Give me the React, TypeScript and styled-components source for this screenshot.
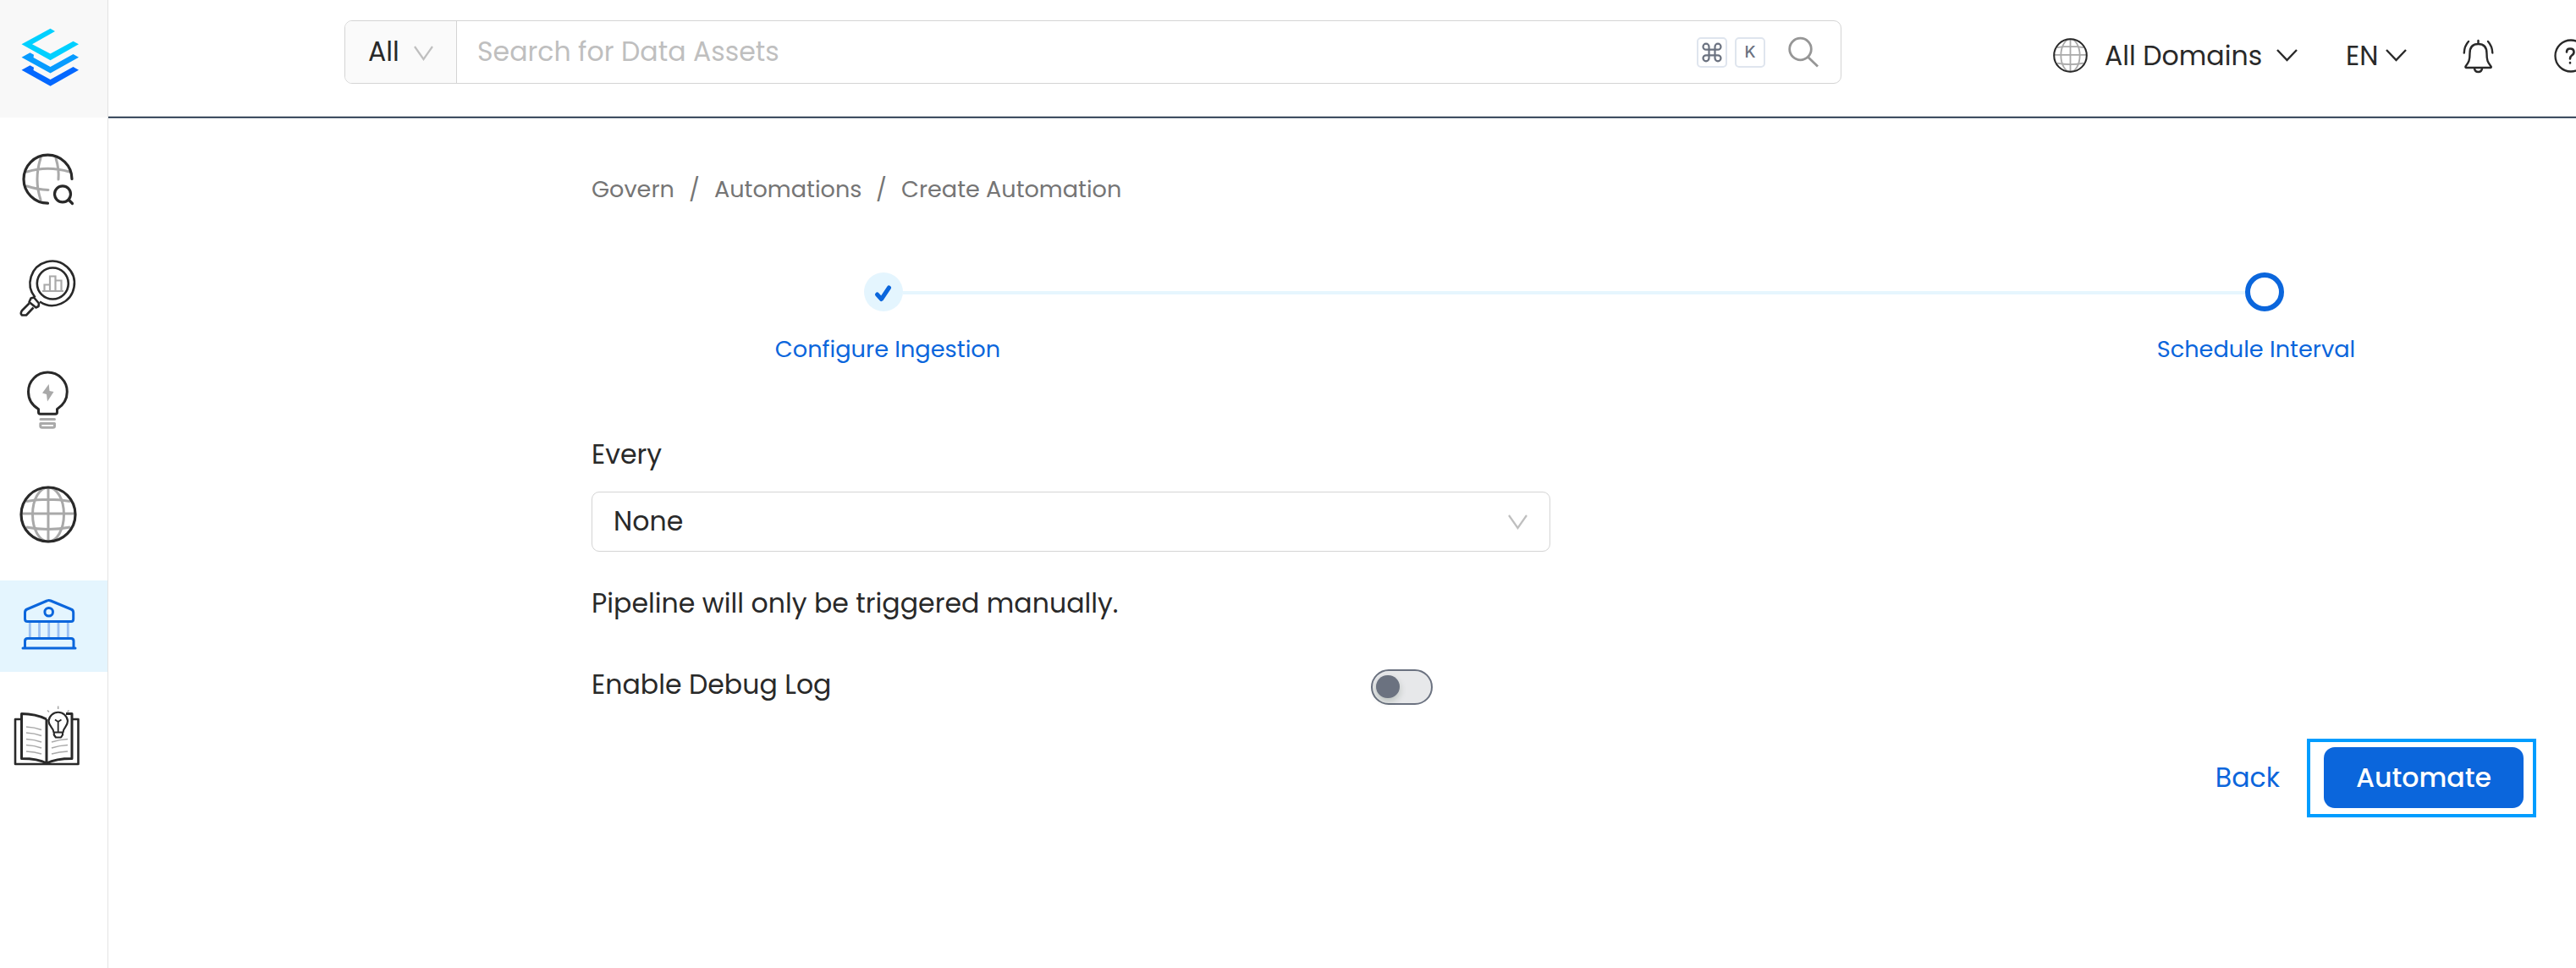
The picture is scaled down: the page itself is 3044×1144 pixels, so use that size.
import React from "react";
import styled, { createGlobalStyle } from "styled-components";

const GlobalStyle = createGlobalStyle`
  * { box-sizing: border-box; }
  body { margin: 0; background: #fff; overflow: hidden; }
`;

const ink = "#292929";
const muted = "#a9a9a9";
const primary = "#0b66dc";
const tint = "#e4f5fe";

const Shell = styled.div`
  display: flex;
  width: 3044px;
  height: 1144px;
  overflow: hidden;
  background: #fff;
  color: ${ink};
  font-family: Poppins, Inter, "Open Sans", sans-serif;
  font-size: 31.6px;
  line-height: 48px;
`;

const Sidebar = styled.nav`
  flex: none;
  width: 128px;
  border-right: 1px solid #e3e3e3;
`;

const NavCell = styled.div<{ $h: number; $bg?: string }>`
  height: ${(p) => p.$h}px;
  background: ${(p) => p.$bg ?? "transparent"};
  svg { display: block; }
`;

const DomainCell = styled(NavCell)`
  padding: 34px 0 0 23px;
`;

const Main = styled.div`
  flex: 1;
  min-width: 0;
  display: flex;
  flex-direction: column;
`;

const Header = styled.header`
  flex: none;
  height: 140px;
  display: flex;
  align-items: flex-start;
  border-bottom: 1px solid #8793a0;
  box-shadow: inset 0 -1px 0 #10223a, inset 0 -2px 0 #c6cace;
  overflow: hidden;
`;

const SearchBar = styled.div`
  flex: none;
  width: 1769px;
  height: 75px;
  margin: 24px 0 0 279px;
  display: flex;
  align-items: center;
  border: 1px solid #d4d4d4;
  border-radius: 9px;
  overflow: hidden;
`;

const Scope = styled.div`
  width: 132px;
  height: 100%;
  padding: 0 0 2px 27px;
  display: flex;
  align-items: center;
  background: #fafafa;
  border-right: 1px solid #d4d4d4;
  svg { margin: 4px 0 0 17px; }
`;

const Label = styled.span<{ $color?: string; $weight?: number; $w?: number }>`
  display: inline-block;
  white-space: nowrap;
  color: ${(p) => p.$color ?? "inherit"};
  font-weight: ${(p) => p.$weight ?? 400};
  width: ${(p) => (p.$w ? `${p.$w}px` : "auto")};
`;

const Placeholder = styled.div`
  flex: 1;
  padding: 0 0 2px 24px;
  color: #bfbfbf;
`;

const Keys = styled.div`
  display: flex;
  gap: 9px;
  margin-right: 25px;
`;

const Key = styled.kbd`
  width: 36px;
  height: 36px;
  display: flex;
  align-items: center;
  justify-content: center;
  border: 2px solid #dfe5ee;
  border-radius: 5px;
  color: #6b7280;
  font: 500 19px Inter, sans-serif;
`;

const SearchIcon = styled.svg`
  margin-right: 24px;
`;

const Tools = styled.div`
  display: flex;
  align-items: center;
  height: 131px;
  flex: none;
  margin-left: 250px;
  > * { flex: none; }
`;

const Gap = styled.div<{ $w: number }>`
  width: ${(p) => p.$w}px;
`;

const Content = styled.main`
  padding: 64px 47px 0 571px;
`;

const Breadcrumb = styled.div`
  display: flex;
  font-size: 27.1px;
  line-height: 40px;
  color: #757575;
`;

const Markers = styled.div`
  display: flex;
  align-items: center;
  width: 1678px;
  margin: 78px 0 0 322px;
`;

const DoneMark = styled.div`
  width: 46px;
  height: 46px;
  border-radius: 50%;
  background: ${tint};
`;

const Track = styled.div`
  flex: 1;
  height: 4px;
  margin-top: 1px;
  background: #e6f6fe;
`;

const CurrentMark = styled.div`
  width: 46px;
  height: 46px;
  border-radius: 50%;
  border: 6px solid ${primary};
`;

const StepLabels = styled.div`
  display: flex;
  justify-content: space-between;
  width: 2017px;
  margin: 25px 0 0 150px;
  font-size: 27.2px;
  line-height: 40px;
  color: ${primary};
`;

const StepLabel = styled.div`
  width: 400px;
  display: flex;
  justify-content: center;
`;

const FieldTitle = styled.div`
  margin-top: 80px;
`;

const Select = styled.div`
  display: flex;
  align-items: center;
  justify-content: space-between;
  width: 1133px;
  height: 71px;
  margin-top: 20px;
  padding: 0 26px 2px 25px;
  border: 1px solid #d4d4d4;
  border-radius: 9px;
  svg { margin-top: 2px; }
`;

const Note = styled.div`
  margin-top: 37px;
`;

const ToggleRow = styled.div`
  display: flex;
  align-items: center;
  justify-content: space-between;
  width: 994px;
  height: 48px;
  margin-top: 48px;
`;

const Toggle = styled.div`
  width: 73px;
  height: 42px;
  margin-top: 5px;
  padding: 5px 4px;
  border: 2.5px solid #6b7280;
  border-radius: 21px;
  background: #e7e8ea;
`;

const Knob = styled.div`
  width: 28px;
  height: 27px;
  border-radius: 14px;
  background: #6b7280;
  box-shadow: 0 4px 8px rgba(0, 35, 11, 0.2);
`;

const Actions = styled.div`
  display: flex;
  justify-content: flex-end;
  align-items: center;
  gap: 32px;
  margin-top: 40px;
  > span { padding-bottom: 2px; }
`;

const Highlight = styled.div`
  width: 271px;
  height: 93px;
  padding: 6px 0 0 16px;
  border: 4px solid #009dff;
`;

const Primary = styled.div`
  width: 236px;
  height: 72px;
  display: flex;
  align-items: center;
  justify-content: center;
  padding-bottom: 1px;
  border-radius: 13px;
  background: ${primary};
  color: #fff;
  text-shadow: 0 -1px 0 rgba(0, 0, 0, 0.12);
`;

const Chevron = ({ w, h, color, sw }: { w: number; h: number; color: string; sw: number }) => (
  <svg width={w} height={h} viewBox={`0 0 ${w} ${h}`} fill="none" stroke={color} strokeWidth={sw}>
    <path d={`M1 1L${w / 2} ${h - 2}L${w - 1} 1`} />
  </svg>
);

const Globe = ({ size, sw, inner }: { size: number; sw: number; inner: number }) => (
  <svg width={size} height={size} viewBox="0 0 68 68" fill="none">
    <g stroke={muted} strokeWidth={inner}>
      <path d="M34 2V66M2 33H66M8 18.5Q34 14 60 18.5M8 49Q34 54 60 49" />
      <ellipse cx="34" cy="34" rx="18.5" ry="32" />
    </g>
    <circle cx="34" cy="34" r="32" stroke={ink} strokeWidth={sw} />
  </svg>
);

const Logo = () => (
  <svg width="127" height="139" viewBox="0 0 127 139">
    <path fill="#00d0ff" d="M59.5 33.7L25.5 52.3L59.5 71.3L93 52.3L86.5 48.7L59.5 63.5L38 52.3L65 37Z" />
    <path fill="#079bff" d="M35.5 62.3L25.5 67.7L59.5 86.5L93 67.7L86.5 64L59.5 79L39.5 68L40 64.7Z" />
    <path fill="#0468ff" d="M35.5 77.3L25.5 82.7L59.5 101.7L93 82.7L86.5 79L59.5 94L39.5 83L40 79.7Z" />
  </svg>
);

/* Each sidebar glyph keeps page-level y values through its viewBox origin. */
const ExploreIcon = () => (
  <svg width="127" height="141" viewBox="0 139 127 141" fill="none" strokeLinecap="round">
    <path stroke={muted} strokeWidth="3" d="M48 187Q40 212 48 236M66 187Q70 200 69 212M32 203Q56 195.500 82 203M32 220Q44 224 57 224.500" />
    <g stroke={ink} strokeWidth="3.200">
      <path d="M85 211.500A28.500 28.500 0 1 0 56.500 240.200" />
      <circle cx="74" cy="229.300" r="9.500" />
      <path d="M81 236L85.500 240.500" />
    </g>
  </svg>
);

const QualityIcon = () => (
  <svg width="127" height="130" viewBox="0 280 127 130" fill="none">
    <path stroke={muted} strokeWidth="2.200" d="M50 344H75M52.500 343V336.500H59M59 343V326.500H65.500V343M65.500 331.500H72.500V343" />
    <g stroke={ink} strokeWidth="2.600" strokeLinejoin="round">
      <circle cx="62.300" cy="335" r="18.500" />
      <path d="M41.500 351.500A26.200 26.200 0 1 1 47 356.500" />
      <path d="M36.500 352.500L40 351.500L46 358.500L45.500 362L42.500 363.500L34.500 357Z" />
      <path d="M34.500 358.500L26 367Q23.500 370.500 26 372.500H31L39.500 363.500" />
    </g>
  </svg>
);

const InsightIcon = () => (
  <svg width="127" height="130" viewBox="0 410 127 130" fill="none">
    <path stroke={ink} strokeWidth="3" strokeLinejoin="round" d="M45.500 483.500C38 479 33.500 472 33.500 463A22.900 22.900 0 1 1 79.300 463C79.300 472 74.500 479 67.500 483.500V487Q67.500 489.300 65.500 489.300H47.500Q45.500 489.300 45.500 487Z" />
    <path fill={muted} d="M57.700 454L50 464.500L55 466L56 474.500L63.500 463L58.500 462Z" />
    <path stroke={muted} strokeWidth="3" strokeLinecap="round" strokeLinejoin="round" d="M48 495.500H64.500M47.800 500.500H64.500V503.500Q64.500 505.300 62.500 505.300H49.800Q47.800 505.300 47.800 503.500Z" />
  </svg>
);

const GovernIcon = () => (
  <svg width="127" height="108" viewBox="0 686 127 108" fill="none" strokeLinecap="round" strokeLinejoin="round">
    <path stroke="#9cc0f3" strokeWidth="2.800" strokeLinecap="butt" d="M35.300 736V753M46.500 736V753M57.700 736V753M69 736V753M80.300 736V753" />
    <g stroke={primary} strokeWidth="3">
      <path d="M29.500 724Q29.500 721 32 720L55.500 710Q57.700 709 60 710L84 720Q86.700 721 86.700 724V731.500Q86.700 734.500 84 734.500H32.500Q29.500 734.500 29.500 731.500Z" />
      <circle cx="57.700" cy="723.300" r="4.800" />
      <path d="M29.500 765V757.500Q29.500 754.500 32.500 754.500H84Q87 754.500 87 757.500V765M27 766H89" />
    </g>
  </svg>
);

const GlossaryIcon = () => (
  <svg width="127" height="140" viewBox="0 794 127 140" fill="none" strokeLinejoin="round">
    <g stroke={muted} strokeWidth="1.600">
      <path d="M31 859Q41 859.500 49 862.500M31 866Q41 866.500 49 869.500M31 873.500Q41 874 49 877M31 880.500Q41 881 49 884M31 888Q41 888.500 49 891" />
      <path d="M61 877Q70 874 80 873.500M61 884Q70 881 80 880.500M61 891Q70 888.500 80 888" />
      <path d="M68.700 834.500V838M56 839.500L58 841.500M81.500 839.500L79.500 841.500" />
    </g>
    <g stroke={ink} strokeWidth="2.600">
      <path d="M24.500 850H18V903H92.500V850H86" />
      <path d="M55 850Q42 843.500 25.500 843.500V896.500Q45 896.500 55 902Q66 896.500 85 896.500V843.500H78M55 850V902" strokeWidth="3" />
      <path fill="#fff" strokeWidth="2.200" d="M63.500 865.500C63.500 860 57.500 859 57.500 852A11.300 11.300 0 0 1 80 852C80 859 74.500 860 74.500 865.500ZM63.800 866V868.500L66 871.500H72L74 868.500V866" />
      <path strokeWidth="1.800" d="M68.700 865V853M65 850.500L68.700 853L72.500 850.500" />
    </g>
  </svg>
);

const Bell = () => (
  <svg width="38" height="42" viewBox="0 0 38 42" fill="none" stroke={ink} strokeWidth="2.400" strokeLinecap="round" strokeLinejoin="round">
    <path d="M18.500 3V7M18.500 7C11 7 8.500 12 8.500 18C8.500 26 7.500 28.500 3.500 33.500Q3 35 4.500 35H32.500Q34.500 35 33.500 33.500C29.500 28.500 28.500 26 28.500 18C28.500 12 26 7 18.500 7ZM14 36Q14.500 40 18.500 40T23 36" />
    <path d="M7 4Q2 9.500 1.800 17.500M30 4Q35 9.500 35.300 17.500" />
  </svg>
);

const Help = () => (
  <svg width="40" height="40" viewBox="0 0 40 40" fill="none" stroke={ink} strokeWidth="2.300">
    <circle cx="20" cy="20" r="18.500" />
    <path strokeWidth="2.600" strokeLinecap="round" d="M15 15.500Q15 11.500 19 11.500Q23.500 11.500 23.500 15.500Q23.500 18 21 19.500Q19 21 19 23.500M19 28V28.400" />
  </svg>
);

export default function App() {
  return (
    <Shell>
      <GlobalStyle />
      <Sidebar>
        <NavCell $h={139} $bg="#f8f8f8"><Logo /></NavCell>
        <NavCell $h={141}><ExploreIcon /></NavCell>
        <NavCell $h={130}><QualityIcon /></NavCell>
        <NavCell $h={130}><InsightIcon /></NavCell>
        <DomainCell $h={146}><Globe size={68} sw={3.2} inner={3} /></DomainCell>
        <NavCell $h={108} $bg={tint}><GovernIcon /></NavCell>
        <NavCell $h={140}><GlossaryIcon /></NavCell>
      </Sidebar>
      <Main>
        <Header>
          <SearchBar>
            <Scope><Label>All</Label><Chevron w={23} h={18} color="#bfbfbf" sw={2.2} /></Scope>
            <Placeholder><Label>Search for Data Assets</Label></Placeholder>
            <Keys>
              <Key>
                <svg width="24" height="24" viewBox="0 0 24 24" fill="none" stroke="#6b7280" strokeWidth="2.200">
                  <path d="M8.500 5.200A3.500 3.500 0 1 0 5 8.700H19A3.500 3.500 0 1 0 15.500 5.200V18.800A3.500 3.500 0 1 0 19 15.300H5A3.500 3.500 0 1 0 8.500 18.800Z" />
                </svg>
              </Key>
              <Key>K</Key>
            </Keys>
            <SearchIcon width="40" height="40" viewBox="0 0 40 40" fill="none" stroke="#969696" strokeWidth="2.800">
              <circle cx="16.500" cy="16" r="12.800" /><path d="M25.500 25.500L37 36.500" />
            </SearchIcon>
          </SearchBar>
          <Tools>
            <Globe size={41} sw={3.4} inner={3} />
            <Gap $w={20} />
            <Label $w={203}>All Domains</Label>
            <Chevron w={25} h={15} color={ink} sw={2.4} />
            <Gap $w={57} />
            <Label $w={47}>EN</Label>
            <Chevron w={25} h={15} color={ink} sw={2.4} />
            <Gap $w={66} />
            <Bell />
            <Gap $w={70} />
            <Help />
          </Tools>
        </Header>
        <Content>
          <Breadcrumb>
            <Label $w={115}>Govern</Label>
            <Label $w={30}>/</Label>
            <Label $w={191}>Automations</Label>
            <Label $w={30}>/</Label>
            <Label>Create Automation</Label>
          </Breadcrumb>
          <Markers>
            <DoneMark>
              <svg width="46" height="46" viewBox="0 0 46 46" fill="none" stroke={primary} strokeWidth="5" strokeLinecap="round" strokeLinejoin="round">
                <path d="M15.500 26L20.500 31.500L29.500 18" />
              </svg>
            </DoneMark>
            <Track />
            <CurrentMark />
          </Markers>
          <StepLabels>
            <StepLabel><Label>Configure Ingestion</Label></StepLabel>
            <StepLabel><Label>Schedule Interval</Label></StepLabel>
          </StepLabels>
          <FieldTitle><Label>Every</Label></FieldTitle>
          <Select><Label>None</Label><Chevron w={23} h={18} color="#bfbfbf" sw={2.2} /></Select>
          <Note><Label>Pipeline will only be triggered manually.</Label></Note>
          <ToggleRow><Label>Enable Debug Log</Label><Toggle><Knob /></Toggle></ToggleRow>
          <Actions>
            <Label $color={primary}>Back</Label>
            <Highlight><Primary><Label $weight={500}>Automate</Label></Primary></Highlight>
          </Actions>
        </Content>
      </Main>
    </Shell>
  );
}
